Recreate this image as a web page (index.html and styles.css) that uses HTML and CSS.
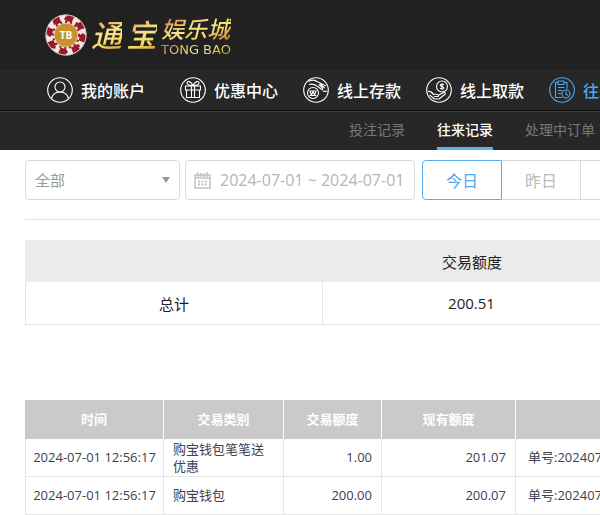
FILE: index.html
```html
<!DOCTYPE html>
<html lang="zh-CN">
<head>
    <meta charset="UTF-8">
    <meta name="viewport" content="width=device-width, initial-scale=1.0">
    <title>往来记录</title>
    <link rel="stylesheet" href="styles.css">
</head>
<body>
    <header class="header">
        <a class="logo" href="#">
            <svg class="logo-chip" viewBox="0 0 42 42" aria-hidden="true">
                <circle cx="21" cy="21" r="20.5" fill="#f3e9e4"/>
                <circle cx="21" cy="21" r="17" fill="none" stroke="#98192b" stroke-width="7" stroke-dasharray="6.7 6.65"/>
                <circle cx="21" cy="21" r="20" fill="none" stroke="#d6c5bd"/>
                <g fill="#98192b">
                    <path d="M21 2l2 3-2 2-2-2zM21 35l2 3-2 2-2-2zM2 21l3-2 2 2-2 2zM35 21l3-2 2 2-2 2z"/>
                    <path d="M8 8l3-1 1 3-3 1zM31 8l3 1-1 3-3-1zM8 31l3 1-1 3-3-1zM31 31l3-1 1 3-3 1z"/>
                </g>
                <circle cx="21" cy="21" r="13.5" fill="#eadcd2"/>
                <circle cx="21" cy="21" r="13" fill="none" stroke="#98192b" stroke-width="2" stroke-dasharray="2 3"/>
                <circle cx="21" cy="21" r="11.5" fill="#c8922e"/>
                <text class="chip-text" x="21" y="25" text-anchor="middle">TB</text>
            </svg>
            <span class="logo-main">通</span>
            <span class="logo-main">宝</span>
            <span class="logo-side">
                <span class="logo-city">娱乐城</span>
                <span class="logo-latin">TONG BAO</span>
            </span>
        </a>
    </header>

    <nav class="nav">
        <a class="nav-item nav-account" href="#">
            <svg class="icon" viewBox="0 0 26 26"><circle cx="13" cy="13" r="12.3"/><circle cx="13" cy="10" r="5"/><path d="M4.5 21.5c1-4 4.500-6.500 8.500-6.500s7.500 2.500 8.500 6.500"/></svg>
            我的账户
        </a>
        <a class="nav-item" href="#">
            <svg class="icon" viewBox="0 0 26 26"><circle cx="13" cy="13" r="12.3"/><path d="M5.500 9h15v4h-15zM6.500 13v7.500h13V13M11.500 9v11.500M14.500 9v11.500M13 8.500C11 4 7 3.500 7 6c0 2 3 2.500 6 2.500C15 4 19 3.500 19 6c0 2-3 2.500-6 2.500z"/></svg>
            优惠中心
        </a>
        <a class="nav-item" href="#">
            <svg class="icon" viewBox="0 0 26 26"><circle cx="13" cy="13" r="12.3"/><circle cx="10" cy="16" r="5.500"/><path d="M6.500 14h7M6.500 18.500h7M7 14.500l1.500 3.500 1.500-3.500 1.500 3.500 1.500-3.500M5.500 4.500c3-2 6.500-1.500 9.500 .5l8 4M6 7.500c3-1 5-.5 8 1.500l4 3c1.500 1 2.500 0 1-1.500l-3-3M17 6.500l4.500 4.500M19.500 14c2 .5 3.500 .5 5 0"/></svg>
            线上存款
        </a>
        <a class="nav-item" href="#">
            <svg class="icon" viewBox="0 0 26 26"><circle cx="13" cy="13" r="12.3"/><circle cx="16" cy="9.500" r="5.500"/><path d="M17.800 7.800c-1-1-3.600-.8-3.600 .5 0 1.700 3.600 1 3.600 2.600 0 1.400-2.800 1.400-3.700 .3M16 6.300v6.400M2 14.500c3-.5 4 .5 5.500 2.500l4 .5c1.500 0 1.500 2 0 2H8M13 18l4.500-2.500c1.500-.8 2.500 .7 1.200 2l-5.700 4.500H8.500l-5-4M5 15l3 3"/></svg>
            线上取款
        </a>
        <a class="nav-item active" href="#">
            <svg class="icon" viewBox="0 0 26 26"><circle cx="13" cy="13" r="12.3"/><path d="M13 20.500H6.500v-15H9M15 5.500h3V12M9 4h6v3.500H9zM9 10.500h6.500M9 13.500h4M9 16.500h3"/><circle cx="17" cy="17" r="4"/><path d="M17 14.500V17l2 1.500"/></svg>
            往来记录
        </a>
    </nav>

    <nav class="subnav">
        <a class="subnav-item" href="#">投注记录</a>
        <a class="subnav-item active" href="#">往来记录</a>
        <a class="subnav-item" href="#">处理中订单</a>
    </nav>

    <main class="content">
        <form class="filters">
            <select class="type-select" aria-label="交易类别">
                <option>全部</option>
            </select>
            <label class="date-box">
                <svg class="calendar" viewBox="0 0 17 17" aria-label="日期"><path d="M1 3h15v13H1zM1 6h15" fill="none" stroke="#c4c4c4" stroke-width="1.500"/><path d="M4 0v5M7 1v4M10 1v4M13 0v5" stroke="#c4c4c4" stroke-width="1.500"/><path d="M4 9.500h9M4 12.500h9" stroke="#c4c4c4" stroke-width="2" stroke-dasharray="2 1.500"/></svg>
                <input class="date-input" type="text" value="2024-07-01 ~ 2024-07-01">
            </label>
            <div class="day-group">
                <button class="day-btn active" type="button">今日</button>
                <button class="day-btn" type="button">昨日</button>
                <button class="day-btn" type="button">本周</button>
            </div>
        </form>

        <table class="summary">
            <thead>
                <tr><th></th><th>交易额度</th><th></th><th></th></tr>
            </thead>
            <tbody>
                <tr><td>总计</td><td>200.51</td><td></td><td></td></tr>
            </tbody>
        </table>

        <table class="records">
            <colgroup>
                <col class="col-time">
                <col class="col-type">
                <col class="col-amount">
                <col class="col-balance">
                <col>
            </colgroup>
            <thead>
                <tr><th>时间</th><th>交易类别</th><th>交易额度</th><th>现有额度</th><th>备注</th></tr>
            </thead>
            <tbody>
                <tr>
                    <td class="time">2024-07-01 12:56:17</td>
                    <td>购宝钱包笔笔送优惠</td>
                    <td class="num">1.00</td>
                    <td class="num">201.07</td>
                    <td>单号:20240701</td>
                </tr>
                <tr>
                    <td class="time">2024-07-01 12:56:17</td>
                    <td>购宝钱包</td>
                    <td class="num">200.00</td>
                    <td class="num">200.07</td>
                    <td>单号:20240701</td>
                </tr>
            </tbody>
        </table>
    </main>
</body>
</html>
```

FILE: styles.css
```css
* {
    box-sizing: border-box;
}
body {
    margin: 0;
    overflow-x: hidden;
    background: #fff;
    color: #222;
    font-family: "Open Sans", "Noto Sans CJK SC", sans-serif;
    font-size: 13px;
}
a {
    color: inherit;
    text-decoration: none;
}

/* header */
.header {
    height: 70px;
    padding: 13px 45px 0;
    background: #212121;
}
.logo {
    display: inline-flex;
    align-items: center;
    gap: 4px;
    height: 44px;
}
.logo-chip {
    width: 42px;
    height: 42px;
}
.chip-text {
    fill: #fff;
    font-size: 10px;
    font-weight: bold;
}
.logo-main,
.logo-city,
.logo-latin {
    background: linear-gradient(160deg, #d8672c, #f6e58a 45%, #f5dc62 65%, #b96b20);
    -webkit-background-clip: text;
    background-clip: text;
    color: transparent;
}
.logo-main {
    font-size: 31px;
    font-weight: 500;
    font-style: italic;
    line-height: 44px;
}
.logo-side {
    display: flex;
    flex-direction: column;
    padding-top: 2px;
}
.logo-city {
    font-size: 23px;
    font-weight: 500;
    font-style: italic;
    line-height: 28px;
}
.logo-latin {
    font-family: "DejaVu Sans", sans-serif;
    font-size: 13px;
    line-height: 14px;
}

/* navigation */
.nav {
    display: flex;
    gap: 25px;
    height: 41px;
    padding-left: 47px;
    background: #272727;
    border-bottom: 1px solid #111;
    white-space: nowrap;
}
.nav-item {
    display: flex;
    flex: none;
    align-items: center;
    gap: 8px;
    color: #fff;
    font-size: 16px;
    font-weight: 500;
}
.nav-account {
    margin-right: 10px;
}
.nav-item.active {
    color: #4fa9ee;
}
.icon {
    width: 26px;
    height: 26px;
    fill: none;
    stroke: currentColor;
    stroke-width: 1.1;
    stroke-linejoin: round;
}
.subnav {
    display: flex;
    gap: 32px;
    height: 39px;
    padding-left: 349px;
    background: #272727;
    border-top: 1px solid #3a3a3a;
    white-space: nowrap;
}
.subnav-item {
    flex: none;
    border-bottom: 3px solid transparent;
    color: #777;
    font-size: 14px;
    line-height: 35px;
}
.subnav-item.active {
    border-bottom-color: #5aaff0;
    color: #fff;
    font-weight: 500;
}

/* filters */
.content {
    min-width: 1242px;
    padding: 10px 25px 0;
}
.filters {
    display: flex;
    gap: 5px;
    padding-bottom: 19px;
    border-bottom: 1px solid #e3e3e3;
}
.type-select,
.date-box {
    height: 40px;
    border: 1px solid #d9d9d9;
    border-radius: 4px;
    background: #fff;
}
.type-select {
    width: 155px;
    padding: 0 9px;
    appearance: none;
    background: url("data:image/svg+xml,%3Csvg xmlns='http://www.w3.org/2000/svg' width='8' height='6'%3E%3Cpath d='M0 0h8L4 6z' fill='%23999'/%3E%3C/svg%3E") no-repeat right 9px center;
    color: #999;
    font-family: inherit;
    font-size: 15px;
}
.date-box {
    display: flex;
    align-items: center;
    gap: 9px;
    width: 230px;
    padding-left: 8px;
}
.calendar {
    flex: none;
    width: 17px;
    height: 17px;
}
.date-input {
    flex: 1;
    min-width: 0;
    padding: 0;
    border: 0;
    outline: 0;
    color: #b5b5b5;
    font-family: inherit;
    font-size: 16px;
}
.day-group {
    display: flex;
    margin-left: 2px;
}
.day-btn {
    width: 80px;
    height: 40px;
    margin-right: -1px;
    border: 1px solid #d9d9d9;
    background: #fff;
    color: #bbb;
    font-family: inherit;
    font-size: 16px;
}
.day-btn.active {
    position: relative;
    border-color: #5aaff0;
    border-radius: 4px 0 0 4px;
    color: #4fa9ee;
}

/* tables */
table {
    width: 100%;
    border-collapse: separate;
    border-spacing: 0;
    table-layout: fixed;
}
td {
    border-right: 1px solid #e6e6e6;
    border-bottom: 1px solid #e6e6e6;
}
td:first-child {
    border-left: 1px solid #e6e6e6;
}
.summary {
    margin: 20px 0 75px;
    color: #222;
    font-size: 15px;
    text-align: center;
}
.summary th {
    height: 42px;
    padding: 0;
    background: #ebebeb;
    font-weight: normal;
}
.summary td {
    height: 43px;
    padding: 0;
}
.records {
    color: #3b4252;
    line-height: 17px;
}
.col-time {
    width: 139px;
}
.col-type {
    width: 120px;
}
.col-amount {
    width: 98px;
}
.col-balance {
    width: 134px;
}
.records th {
    height: 39px;
    padding: 0;
    background: #cacaca;
    border-right: 1px solid #fff;
    color: #fff;
}
.records td {
    height: 38px;
    padding: 0 9px;
}
.records td:last-child {
    padding-left: 12px;
}
.records .time {
    padding: 0;
    text-align: center;
}
.records .num {
    text-align: right;
}
```
